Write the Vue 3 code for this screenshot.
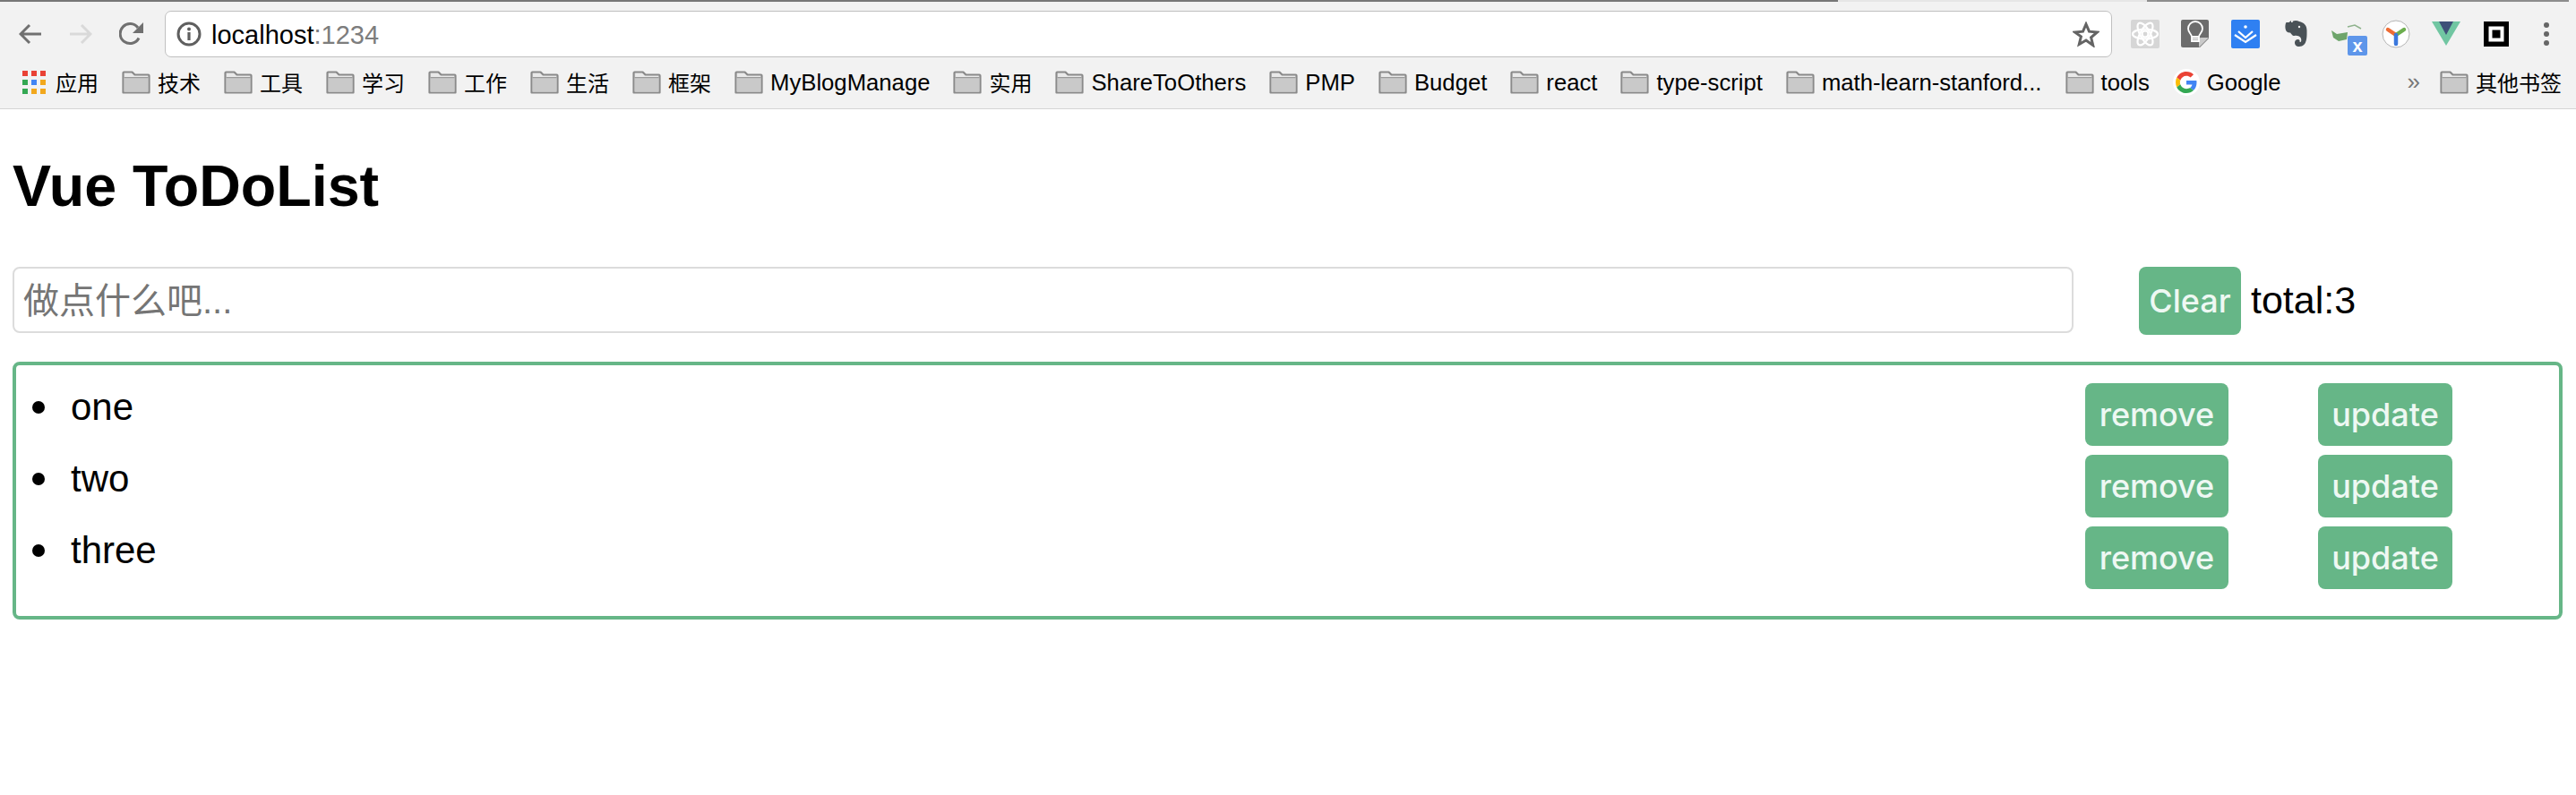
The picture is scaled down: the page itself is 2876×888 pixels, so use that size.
<script setup>
const bookmarks = [
  { label: '技术', cjk: true }, { label: '工具', cjk: true }, { label: '学习', cjk: true },
  { label: '工作', cjk: true }, { label: '生活', cjk: true }, { label: '框架', cjk: true },
  { label: 'MyBlogManage' }, { label: '实用', cjk: true }, { label: 'ShareToOthers' },
  { label: 'PMP' }, { label: 'Budget' }, { label: 'react' }, { label: 'type-script' },
  { label: 'math-learn-stanford...' }, { label: 'tools' }
]
const todos = ['one', 'two', 'three']
const appColors = ['#e94235', '#e94235', '#e94235', '#34a853', '#4285f4', '#f2a81d', '#34a853', '#f2a81d', '#f2a81d']
</script>

<template>
  <div class="page">
    <header class="chrome">
      <div class="tabline"></div>
      <div class="nav">
        <svg class="nav-icon" width="26" height="24" viewBox="0 0 26 24"><path d="M25 12H3M12 2 2 12l10 10" fill="none" stroke="#707070" stroke-width="3"/></svg>
        <svg class="nav-icon forward" width="26" height="24" viewBox="0 0 26 24"><path d="M1 12h22M14 2l10 10-10 10" fill="none" stroke="#d9d9d9" stroke-width="3"/></svg>
        <svg class="nav-icon reload" width="28" height="26" viewBox="0 0 28 26"><path d="M22 17.500A11 11 0 1 1 21 6" fill="none" stroke="#707070" stroke-width="3"/><path d="M27 0v12H15z" fill="#707070"/></svg>
        <div class="url">
          <svg width="28" height="28" viewBox="0 0 28 28"><circle cx="14" cy="14" r="12" fill="none" stroke="#5f5f5f" stroke-width="3"/><circle cx="14" cy="8.500" r="2" fill="#5f5f5f"/><rect x="12.400" y="12" width="3.200" height="9" fill="#5f5f5f"/></svg>
          <span class="host">localhost<span class="port">:1234</span></span>
          <svg class="star" width="30" height="29" viewBox="0 0 30 29"><path d="M15 3l3.500 8.200 8.900.8-6.800 5.800 2.100 8.700L15 21l-7.700 4.500 2.100-8.700L2.600 12l8.900-.8z" fill="none" stroke="#646464" stroke-width="3"/></svg>
        </div>
        <div class="exts">
          <svg width="56" height="52" viewBox="0 0 56 52"><rect x="12" y="10" width="32" height="32" rx="2" fill="#d6d6d6"/><g fill="none" stroke="#fff" stroke-width="2.200"><ellipse cx="28" cy="26" rx="14" ry="5.500"/><ellipse cx="28" cy="26" rx="14" ry="5.500" transform="rotate(60 28 26)"/><ellipse cx="28" cy="26" rx="14" ry="5.500" transform="rotate(120 28 26)"/><circle cx="28" cy="26" r="3.500"/></g></svg>
          <svg width="56" height="52" viewBox="0 0 56 52"><path d="M14 10h27a2 2 0 0 1 2 2v19L33 41H14a2 2 0 0 1-2-2V12a2 2 0 0 1 2-2z" fill="#6c6c6c"/><path d="M43 30 32 41V32a2 2 0 0 1 2-2z" fill="#c9c9c9"/><path d="M24 29c0-3-4-4.500-4-9a8 8 0 0 1 16 0c0 4.500-4 6-4 9zM24 29v5h8v-5M24 31.500h8" fill="none" stroke="#fff" stroke-width="1.800"/></svg>
          <svg width="56" height="52" viewBox="0 0 56 52"><rect x="12" y="10" width="32" height="32" rx="2" fill="#2f80f2"/><circle cx="28" cy="18" r="1.800" fill="#fff"/><path d="M20 23l8 7 8-7M16 27l12 8 12-8" fill="none" stroke="#fff" stroke-width="2.200"/></svg>
          <svg width="56" height="52" viewBox="0 0 56 52"><path d="M18 15l5-4v5h-5zM24 12c3-1.500 6-1 8 0 5 1 8.500 4 8.500 10 0 6 1 18-8.500 18-3.500 0-5-2-5-4.500 0-2 1.500-3.500 3.500-3.500 2 0 2.500 1.500 2 3 2 .5 2-2 1.500-4-1-3-5-3.500-7.500-3-2 .5-3-2-4.500-3.500-3 0-5-1-5.500-5-.3-2.500 0-5 1-6.500h6c1 0 1.500-.5 1.500-1.500z" fill="#4a5257"/><circle cx="32" cy="18" r="1.200" fill="#f2f2f2"/></svg>
          <svg width="56" height="52" viewBox="0 0 56 52"><path d="M12 22l6 4 12-2-1 8-9 2-6-4z" fill="#6ea56b"/><path d="M30 18l8-2 7 4" fill="none" stroke="#8fb38d" stroke-width="1.500"/><rect x="30" y="28" width="22" height="22" rx="2" fill="#5e96ea"/><text x="41" y="46" class="badge">x</text></svg>
          <svg width="56" height="52" viewBox="0 0 56 52"><circle cx="28" cy="26" r="15" fill="#fff" stroke="#b5b5b5" stroke-width="1"/><g fill="none" stroke-width="4.500" stroke-linecap="round"><path d="M28 27 19 21" stroke="#ee6c35"/><path d="M28 27l9-6" stroke="#6cae4e"/><path d="M28 27v10" stroke="#3b78dd"/></g></svg>
          <svg width="56" height="52" viewBox="0 0 56 52"><path d="M12 12h32L28 39z" fill="#71c6a2"/><path d="M20 12h16l-8 15z" fill="#3f5178"/></svg>
          <svg width="56" height="52" viewBox="0 0 56 52"><rect x="14" y="12" width="28" height="28" fill="#000"/><rect x="19.500" y="17.500" width="17" height="17" fill="#fff"/><rect x="23.500" y="21.500" width="9" height="9" fill="#000"/></svg>
          <svg width="56" height="52" viewBox="0 0 56 52"><circle cx="28" cy="16" r="3" fill="#666"/><circle cx="28" cy="26" r="3" fill="#666"/><circle cx="28" cy="36" r="3" fill="#666"/></svg>
        </div>
      </div>
      <nav class="bookmarks">
        <div class="bm apps">
          <span class="apps-grid"><i v-for="(c, n) in appColors" :key="n" :style="{ background: c }"></i></span>
          <span class="cjk">应用</span>
        </div>
        <div v-for="b in bookmarks" :key="b.label" class="bm">
          <svg class="folder" width="32" height="26" viewBox="0 0 32 26"><use href="#folder-shape"/></svg>
          <span :class="{ cjk: b.cjk }">{{ b.label }}</span>
        </div>
        <div class="bm google">
          <span class="g-wrap">
            <svg width="24" height="24" viewBox="0 0 48 48"><path fill="#EA4335" d="M24 9.500c3.540 0 6.710 1.220 9.210 3.600l6.850-6.850C35.900 2.380 30.470 0 24 0 14.620 0 6.510 5.380 2.560 13.220l7.980 6.190C12.430 13.720 17.740 9.500 24 9.500z"/><path fill="#4285F4" d="M46.980 24.550c0-1.570-.15-3.090-.38-4.550H24v9.020h12.940c-.58 2.960-2.260 5.480-4.780 7.180l7.730 6c4.510-4.180 7.090-10.360 7.090-17.650z"/><path fill="#FBBC05" d="M10.530 28.590c-.48-1.450-.76-2.990-.76-4.590s.27-3.140.76-4.590l-7.980-6.190C.92 16.460 0 20.120 0 24c0 3.880.92 7.540 2.560 10.780l7.970-6.190z"/><path fill="#34A853" d="M24 48c6.480 0 11.930-2.130 15.890-5.810l-7.730-6c-2.150 1.450-4.920 2.300-8.160 2.300-6.260 0-11.570-4.220-13.470-9.910l-7.980 6.190C6.510 42.620 14.620 48 24 48z"/></svg>
          </span>
          <span>Google</span>
        </div>
        <span class="more">»</span>
        <div class="bm other">
          <svg class="folder" width="32" height="26" viewBox="0 0 32 26"><use href="#folder-shape"/></svg>
          <span class="cjk">其他书签</span>
        </div>
      </nav>
      <svg width="0" height="0" class="defs"><defs><g id="folder-shape"><path d="M1.500 24.500V2.500A1 1 0 0 1 2.500 1.500h9l3 3h15a1 1 0 0 1 1 1v19z" fill="#e9e9e9" stroke="#8a8a8a" stroke-width="2.200" stroke-linejoin="round"/><rect x="2.600" y="8" width="26.800" height="15.500" fill="#c9c9c9"/><rect x="2.600" y="7" width="26.800" height="1.200" fill="#9a9a9a"/></g></defs></svg>
    </header>

    <main class="content">
      <h1>Vue ToDoList</h1>
      <div class="add-row">
        <input class="todo-input" type="text" placeholder="做点什么吧..." />
        <button class="btn clear">Clear</button>
        <span class="total">total:3</span>
      </div>
      <ul class="list">
        <li v-for="t in todos" :key="t" class="item">
          <span class="dot"></span>
          <span class="item-text">{{ t }}</span>
          <button class="btn remove">remove</button>
          <button class="btn update">update</button>
        </li>
      </ul>
    </main>
  </div>
</template>

<style scoped>
.page {
  width: 2876px;
  min-height: 888px;
  background: #fff;
  font-family: "Liberation Sans", "Noto Sans CJK SC", sans-serif;
  color: #000;
}
.chrome {
  background: #f2f2f2;
}
.tabline {
  height: 2px;
  background: linear-gradient(90deg, #777 0, #777 2052px, #e6e6e6 2052px, #e6e6e6 2397px, #8d8d8d 2397px, #8d8d8d 2868px, #f2f2f2 2868px);
}
.nav {
  height: 72px;
  display: flex;
  align-items: center;
  padding-left: 21px;
}
.nav-icon {
  flex: none;
}
.forward {
  margin-left: 30px;
}
.reload {
  margin-left: 30px;
  margin-right: 23px;
}
.url {
  flex: none;
  width: 2174px;
  height: 52px;
  box-sizing: border-box;
  background: #fff;
  border: 1px solid #c0c0c0;
  border-radius: 7px;
  display: flex;
  align-items: center;
  padding: 0 13px 0 12px;
}
.host {
  margin-left: 11px;
  padding-top: 2px;
  font-size: 29px;
  flex: 1;
}
.port {
  color: #7d7d7d;
}
.exts {
  display: flex;
  margin-left: 9px;
}
.exts svg {
  flex: none;
}
.badge {
  fill: #fff;
  font: bold 20px "Liberation Sans", sans-serif;
  text-anchor: middle;
}
.bookmarks {
  height: 48px;
  box-sizing: border-box;
  border-bottom: 1px solid #d4d4d4;
  display: flex;
  align-items: flex-start;
  padding: 3px 16px 0 25px;
  font-size: 25.7px;
  gap: 26px;
}
.bm {
  height: 30px;
  display: flex;
  align-items: center;
  gap: 8px;
  white-space: nowrap;
}
.cjk {
  font-size: 24px;
  padding-bottom: 2px;
}
.folder {
  flex: none;
}
.apps {
  gap: 11px;
}
.apps-grid {
  width: 26px;
  display: grid;
  grid-template-columns: repeat(3, 6px);
  grid-auto-rows: 6px;
  gap: 4px;
}
.g-wrap {
  width: 30px;
  height: 30px;
  border-radius: 50%;
  background: #fff;
  display: flex;
  align-items: center;
  justify-content: center;
}
.more {
  margin-left: auto;
  color: #777;
  font-size: 26px;
  line-height: 28px;
}
.other {
  margin-left: -4px;
}
.defs {
  position: absolute;
}

.content {
  padding: 49px 15px 0 14px;
}
h1 {
  margin: 0 0 53px;
  font-size: 64.6px;
  line-height: 74px;
  font-weight: 700;
}
.add-row {
  display: flex;
  align-items: flex-start;
  height: 76px;
}
.todo-input {
  width: 2301px;
  height: 74px;
  box-sizing: border-box;
  border: 2px solid #dcdcdc;
  border-radius: 8px;
  padding: 2px 10px 0;
  font: 40px "Liberation Sans", "Noto Sans CJK SC", sans-serif;
  outline: none;
}
.todo-input::placeholder {
  color: #757575;
}
.btn {
  border: 0;
  background: #66b687;
  color: #eef8f3;
  border-radius: 8px;
  font: 500 36px Inter, sans-serif;
  padding: 0;
}
.clear {
  width: 114px;
  height: 76px;
  margin-left: 73px;
}
.total {
  margin-left: 11px;
  font-size: 43px;
  line-height: 74px;
}
.list {
  list-style: none;
  margin: 30px 0 0;
  width: 2847px;
  box-sizing: border-box;
  border: 4px solid #66b687;
  border-radius: 8px;
  padding: 20px 119px 20px 18px;
}
.item {
  height: 80px;
  display: flex;
  align-items: flex-start;
}
.dot {
  flex: none;
  width: 14px;
  height: 14px;
  border-radius: 50%;
  background: #000;
  margin-top: 20px;
  margin-right: 29px;
}
.item-text {
  flex: 1;
  font-size: 42px;
  line-height: 50px;
  padding-top: 2px;
}
.remove {
  width: 160px;
  height: 70px;
  margin-right: 100px;
}
.update {
  width: 150px;
  height: 70px;
}
</style>
